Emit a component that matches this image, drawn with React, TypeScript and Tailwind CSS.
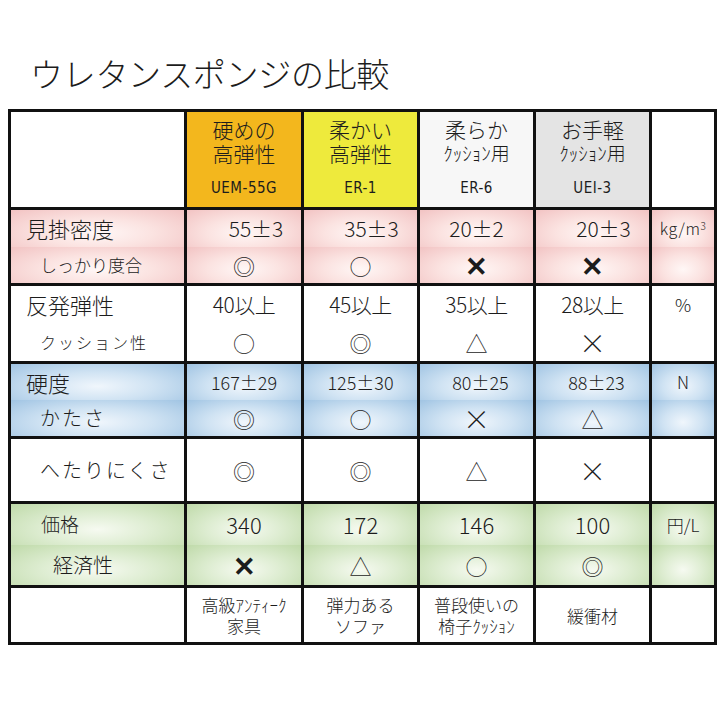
import React from "react";

/**
 * ウレタンスポンジの比較表。
 * 黒い罫線は grid の gap で出し、帯になる行（密度・硬度・価格）は
 * サブセルごとに放射グラデーションを敷く。
 */

type Band = "pink" | "blue" | "green" | "white";

const BAND_CLASS: Record<Band, string> = {
  pink: "bg-[radial-gradient(ellipse_at_50%_62%,#fff7f6_0%,#fbe3e1_45%,#f2c3c3_100%)]",
  blue: "bg-[radial-gradient(ellipse_at_50%_62%,#f0f6fc_0%,#d0e3f3_45%,#a0c4e3_100%)]",
  green: "bg-[radial-gradient(ellipse_at_50%_62%,#f6faf1_0%,#deedd2_45%,#bfdaa9_100%)]",
  white: "bg-white",
};

const FONT = { fontFamily: '"Noto Sans CJK JP", "Noto Sans", sans-serif' };
const NARROW = {
  fontFamily: '"Liberation Sans Narrow", "DejaVu Sans Condensed", "Noto Sans CJK JP", sans-serif',
};

function Mark({ m }: { m: string }) {
  if (m === "X") {
    return <span className="text-[27px] font-bold leading-none">✕</span>;
  }
  if (m === "×") {
    return <span className="text-[27px] font-light leading-none">×</span>;
  }
  return <span className="text-[22px] font-light leading-none">{m}</span>;
}

function SubCell({
  band,
  children,
  className = "",
}: {
  band: Band;
  children?: React.ReactNode;
  className?: string;
}) {
  return (
    <div className={`flex flex-1 items-center ${BAND_CLASS[band]} ${className}`}>
      {children}
    </div>
  );
}

interface Row {
  band: Band;
  label: string;
  labelClass: string;
  sub?: string;
  subClass?: string;
  values: string[];
  valueClass: string;
  valuePad?: string[];
  marks?: string[];
  unit?: React.ReactNode;
}

const ROWS: Row[] = [
  {
    band: "pink",
    label: "見掛密度",
    labelClass: "pl-[15px] text-[22px]",
    sub: "しっかり度合",
    subClass: "pl-[29px] text-[17px]",
    values: ["55±3", "35±3", "20±2", "20±3"],
    valueClass: "text-[21px]",
    valuePad: ["pl-[24px]", "pl-[22px]", "", "pl-[22px]"],
    marks: ["◎", "○", "X", "X"],
    unit: (
      <span className="text-[16px] tracking-[0.5px]">
        kg/m<sup className="text-[10px]">3</sup>
      </span>
    ),
  },
  {
    band: "white",
    label: "反発弾性",
    labelClass: "pl-[15px] text-[22px]",
    sub: "クッション性",
    subClass: "pl-[29px] text-[16px] tracking-[2px]",
    values: ["40以上", "45以上", "35以上", "28以上"],
    valueClass: "text-[21px] tracking-[-0.5px]",
    marks: ["○", "◎", "△", "×"],
    unit: <span className="text-[18px]">%</span>,
  },
  {
    band: "blue",
    label: "硬度",
    labelClass: "pl-[15px] text-[22px]",
    sub: "かたさ",
    subClass: "pl-[29px] text-[20px] tracking-[2px]",
    values: ["167±29", "125±30", "80±25", "88±23"],
    valueClass: "text-[18px]",
    valuePad: ["", "", "pl-[8px]", "pl-[8px]"],
    marks: ["◎", "○", "×", "△"],
    unit: <span className="text-[17px]">N</span>,
  },
];

const COLS = [
  { top: ["硬めの", "高弾性"], model: "UEM-55G", bg: "bg-[#f3b71d]" },
  { top: ["柔かい", "高弾性"], model: "ER-1", bg: "bg-[#eeea3c]" },
  { top: ["柔らか", "ｸｯｼｮﾝ用"], model: "ER-6", bg: "bg-[#f7f7f7]" },
  { top: ["お手軽", "ｸｯｼｮﾝ用"], model: "UEI-3", bg: "bg-[#e4e4e4]" },
];

function BandRow({ row }: { row: Row }) {
  return (
    <>
      <div className="flex flex-col">
        <SubCell band={row.band} className={row.labelClass}>
          {row.label}
        </SubCell>
        <SubCell band={row.band} className={row.subClass}>
          {row.sub}
        </SubCell>
      </div>
      {row.values.map((v, i) => (
        <div key={v + i} className="flex flex-col">
          <SubCell
            band={row.band}
            className={`justify-center ${row.valueClass} ${row.valuePad?.[i] ?? ""}`}
          >
            {v}
          </SubCell>
          <SubCell band={row.band} className="justify-center">
            <Mark m={row.marks?.[i] ?? ""} />
          </SubCell>
        </div>
      ))}
      <div className="flex flex-col">
        <SubCell band={row.band} className="justify-center">
          {row.unit}
        </SubCell>
        <SubCell band={row.band} />
      </div>
    </>
  );
}

export default function App() {
  return (
    <div className="h-[724px] w-[724px] bg-white text-[#1c1c1c]" style={FONT}>
      <h1 className="pl-[30px] pt-[53px] text-[33px] font-light leading-[40px] tracking-[-0.3px]">
        ウレタンスポンジの比較
      </h1>

      <div className="ml-[8px] mt-[16px] grid w-[709px] grid-cols-[173px_114px_113px_113px_113px_62px] grid-rows-[95px_73px_75px_72px_62px_81px_54px] gap-[3px] bg-[#111] p-[3px] font-light">
        {/* ─── ヘッダー ─────────────────────────────────────────── */}
        <div className="bg-white" />
        {COLS.map((c) => (
          <div
            key={c.model}
            className={`flex flex-col items-center pb-[8px] pt-[5px] ${c.bg}`}
          >
            <span className="text-[21px] leading-[24px]">{c.top[0]}</span>
            <span
              className={
                c.top[1] === "高弾性"
                  ? "text-[21px] leading-[24px]"
                  : "text-[19px] leading-[24px]"
              }
            >
              {c.top[1]}
            </span>
            <span className="mt-auto text-[15px] tracking-[0.5px]" style={NARROW}>
              {c.model}
            </span>
          </div>
        ))}
        <div className="bg-white" />

        {/* ─── 密度・反発・硬度 ────────────────────────────────── */}
        {ROWS.map((r) => (
          <BandRow key={r.label} row={r} />
        ))}

        {/* ─── へたりにくさ ────────────────────────────────────── */}
        <div className="flex items-center bg-white pl-[29px] text-[20px] tracking-[2px]">
          へたりにくさ
        </div>
        {["◎", "◎", "△", "×"].map((m, i) => (
          <div key={i} className="flex items-center justify-center bg-white">
            <Mark m={m} />
          </div>
        ))}
        <div className="bg-white" />

        {/* ─── 価格 ────────────────────────────────────────────── */}
        <BandRow
          row={{
            band: "green",
            label: "価格",
            labelClass: "pl-[30px] text-[19px]",
            sub: "経済性",
            subClass: "pl-[42px] text-[20px]",
            values: ["340", "172", "146", "100"],
            valueClass: "text-[22px]",
            marks: ["X", "△", "○", "◎"],
            unit: <span className="text-[17px]">円/L</span>,
          }}
        />

        {/* ─── 用途 ────────────────────────────────────────────── */}
        <div className="bg-white" />
        {[
          ["高級ｱﾝﾃｨｰｸ", "家具"],
          ["弾力ある", "ソファ"],
          ["普段使いの", "椅子ｸｯｼｮﾝ"],
          ["緩衝材"],
        ].map((lines, i) => (
          <div
            key={i}
            className="flex flex-col items-center justify-center bg-white text-[17px] leading-[21px]"
          >
            {lines.map((l) => (
              <span key={l}>{l}</span>
            ))}
          </div>
        ))}
        <div className="bg-white" />
      </div>
    </div>
  );
}
